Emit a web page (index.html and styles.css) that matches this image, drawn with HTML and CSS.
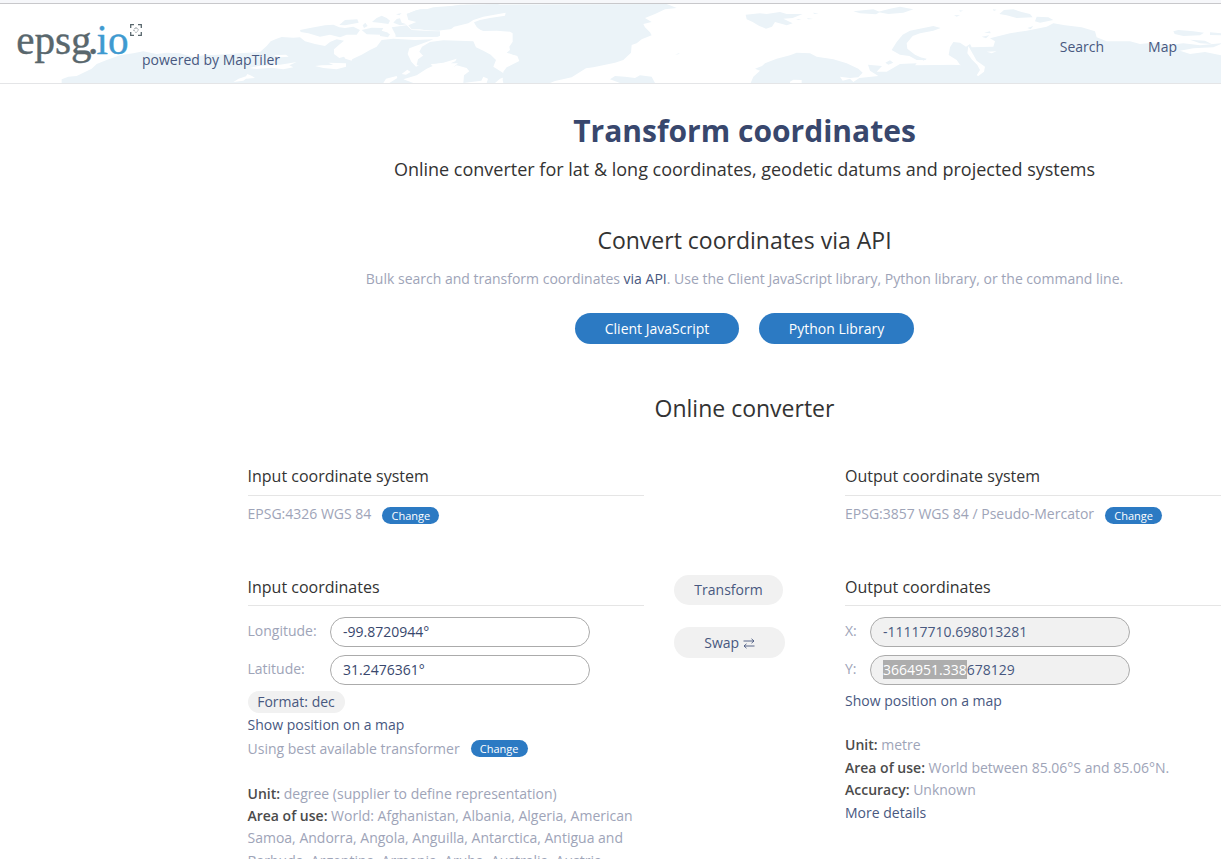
FILE: index.html
```html
<!DOCTYPE html>
<html lang="en">
<head>
<meta charset="utf-8">
<title>Transform coordinates</title>
<link rel="stylesheet" href="styles.css">
</head>
<body>
<div class="page">
  <div class="strip"></div>
  <header class="header">
    <svg class="worldmap" viewBox="0 12 3663 237" width="1221" height="79" fill="#ebf3f8" aria-hidden="true">
      <path d="M185 249V238L205 230 230 228 275 206 290 192 320 180 360 166 400 160 430 154 470 162 500 158 540 160 580 172 610 166 640 165 720 160 780 156 800 138 812 124 830 116 845 111 880 113 900 112 915 124 945 132 975 138 990 126 1010 118 1032 122 1020 132 1002 148 1002 162 1018 174 1040 168 1056 178 1085 164 1110 150 1130 140 1145 120 1180 116 1245 120 1300 118 1285 124 1255 135 1228 145 1223 162 1234 185 1248 200 1266 192 1280 182 1270 168 1258 155 1266 140 1290 126 1330 121 1420 124 1428 142 1450 152 1472 164 1488 180 1480 200 1505 216 1522 228 1500 236 1485 249H1460L1464 236 1450 230 1444 242 1390 249 1392 226 1408 214 1400 204 1370 196 1350 206 1340 218 1330 222 1308 238 1290 249Z"/>
      <path fill="#fff" d="M748 204L770 199 805 196 805 192 840 194 868 190 890 186 868 196 880 202 850 208 815 203 770 207ZM700 246L716 236 738 229 742 222 756 228 765 234 738 236 730 242ZM945 198L965 196 1000 195 985 188 1038 190 1038 200 1010 208 970 204ZM820 166L858 164 866 170 840 172ZM1020 150L1055 140 1062 150 1092 148 1088 158 1062 164 1055 182 1036 176ZM1150 249L1158 236 1190 228 1192 234 1168 249ZM1205 222L1222 209 1232 216 1218 224ZM1210 238L1250 226 1280 206 1298 198 1290 192 1312 190 1345 178 1370 176 1366 184 1352 190 1374 190 1360 202 1348 210 1366 216 1402 208 1400 218 1380 232 1345 228 1320 240 1305 249H1240Z"/>
      <path d="M900 90L930 84 975 76 1000 74 1018 82 1035 84 1060 80 1080 90 1070 104 1040 104 1020 112 990 104 960 110 925 100 902 96ZM1018 75L1035 60 1072 58 1076 68 1035 76ZM1088 76L1096 68 1103 78 1092 84ZM1116 66L1130 54 1145 47 1160 54 1170 62 1165 72 1138 68ZM1180 68L1190 57 1200 55 1205 68 1220 73 1200 76ZM1188 43L1205 39 1198 46ZM1085 90L1115 83 1150 84 1145 92 1165 98 1140 104 1100 103ZM1140 108L1140 98 1158 96 1170 103 1164 112ZM1175 82L1220 76 1235 90 1290 94 1320 98 1315 110 1190 111ZM1225 60L1220 42 1250 30 1280 28 1300 22 1400 14 1500 12 1446 40 1445 60 1425 74 1400 86 1380 82 1350 87 1315 92 1260 90 1290 83 1235 80 1258 68Z"/>
      <path d="M1186 110L1190 96 1235 92 1320 94 1320 108 1298 111ZM1250 195L1254 178 1280 160 1330 145 1370 176 1330 188 1295 192 1280 205Z"/>
      <path d="M1220 42L1260 28 1310 26 1380 14 2000 12 2030 24 1995 28 1965 42 1935 54 1955 66 1930 72 1935 82 1950 97 1955 106 1925 118 1910 130 1895 135 1893 158 1870 180 1845 188 1780 202 1758 205 1715 232 1665 243 1650 249H1510L1508 240 1510 215 1520 202 1540 192 1558 183 1552 168 1520 158 1530 150 1528 140 1538 125 1538 100 1530 95 1490 92 1450 93 1436 88 1420 70 1390 82 1350 88 1235 88 1225 76 1258 62Z"/>
      <path fill="#fff" d="M1318 110L1345 94 1362 80 1405 70 1420 60 1450 50 1517 38 1515 47 1470 54 1440 60 1422 67 1430 82 1445 92 1420 104 1330 116Z"/>
      <path d="M1530 161L1542 154 1542 164ZM1548 160L1560 158 1550 163ZM1830 238L1845 228 1875 230 1905 234 1920 226 1955 230 1965 249H1860ZM2025 164L2040 158 2035 163ZM2237 44L2280 40 2300 42 2340 36 2360 42 2408 42 2378 54 2350 56 2378 70 2360 76 2325 66 2316 80 2298 86 2278 78 2258 66 2240 58ZM2388 58L2405 57 2395 60ZM2420 54L2440 57 2425 58ZM2438 38L2456 40 2444 42ZM2560 34L2620 28 2640 36 2628 43 2580 40ZM2632 36L2670 26 2700 20 2740 28 2710 38 2665 42Z"/>
      <path d="M2252 249L2260 230 2280 212 2265 206 2286 198 2295 190 2330 176 2370 166 2390 158 2430 160 2450 170 2500 178 2540 190 2575 206 2588 218 2575 232 2550 234 2520 230 2528 242 2550 236 2560 246 2578 234 2600 232 2635 228 2610 212 2604 194 2646 198 2630 215 2660 215 2700 192 2750 190 2745 196 2880 194 2870 180 2846 165 2850 142 2860 126 2880 128 2898 140 2910 132 2915 142 2980 140 2985 124 2970 115 3030 100 3080 92 3140 80 3160 70 3195 76 3245 82 3285 94 3290 112 3320 124 3390 124 3420 132 3460 128 3500 136 3550 130 3600 136 3663 130V249Z"/>
      <path fill="#fff" d="M2370 245L2380 239 2405 240 2405 249H2370ZM2905 138L2920 164 2930 182 2955 200 2952 215 2935 228 2930 226 2940 210 2932 195 2915 178 2902 160ZM2765 170L2810 180 2850 184 2885 196 2820 190 2780 188ZM2960 155L2990 154 2975 160ZM3540 152L3580 145 3640 142 3663 132V166L3615 156 3570 162Z"/>
      <path d="M2675 150L2690 126 2708 104 2730 92 2800 78 2822 84 2800 92 2760 100 2738 108 2720 130 2722 146 2745 164 2780 180 2750 180 2728 168 2700 164ZM2656 188L2670 181 2680 188 2665 194ZM2760 172L2780 176 2770 182ZM2862 46L2880 45 2870 50ZM2878 31L2890 32 2880 35ZM2998 42L3012 30 3040 28 3065 36 3090 42 3098 52 3050 54 3020 46ZM3105 64L3110 50 3145 52 3160 60 3120 68ZM2978 28L2990 29 2982 33ZM2952 98L2970 94 2972 100ZM2945 110L2968 106 2958 115ZM3082 84L3100 78 3092 88ZM3520 94L3535 90 3580 94 3612 98 3600 106 3550 108 3524 102ZM3630 97L3663 100V106L3630 105ZM3570 119L3615 122 3635 132 3600 130Z"/>
    </svg>
    <div class="brand">
      <svg class="logo" width="128" height="48" viewBox="15 20 128 48" role="img" aria-label="epsg.io">
        <text class="logo-text" y="54.300" fill="#59676d"><tspan x="16.200" textLength="75.500" lengthAdjust="spacingAndGlyphs">epsg</tspan><tspan x="87.800">.</tspan><tspan x="96.600" textLength="32" lengthAdjust="spacingAndGlyphs" class="logo-io">io</tspan></text>
        <g fill="none" stroke="#59676d">
          <path stroke-width="1.300" d="M130.700 28V24.700H134M138 24.700H141.300V28M141.300 32V35.300H138M134 35.300H130.700V32"/>
          <path stroke-width=".8" stroke-dasharray="2 1" d="M136 27.500L138.500 30 136 32.500 133.500 30Z"/>
        </g>
      </svg>
      <a class="powered">powered by MapTiler</a>
    </div>
    <nav class="nav"><a>Search</a><a>Map</a></nav>
  </header>

  <main class="main">
    <h1 class="title">Transform coordinates</h1>
    <p class="subtitle">Online converter for lat &amp; long coordinates, geodetic datums and projected systems</p>
    <h2 class="section-title">Convert coordinates via API</h2>
    <p class="lead">Bulk search and transform coordinates <a class="link">via API</a>. Use the Client JavaScript library, Python library, or the command line.</p>
    <div class="actions">
      <a class="btn btn-js">Client JavaScript</a>
      <a class="btn btn-python">Python Library</a>
    </div>
    <h2 class="section-title converter-title">Online converter</h2>

    <div class="converter">
      <section class="column">
        <h3 class="heading">Input coordinate system</h3>
        <div class="system"><span>EPSG:4326 WGS 84</span><a class="change">Change</a></div>
        <h3 class="heading coordinates">Input coordinates</h3>
        <div class="fields">
          <div class="field"><span class="label">Longitude:</span><div class="value">-99.8720944°</div></div>
          <div class="field"><span class="label">Latitude:</span><div class="value">31.2476361°</div></div>
        </div>
        <a class="format">Format: dec</a>
        <a class="link show-input">Show position on a map</a>
        <div class="transformer"><span>Using best available transformer</span><a class="change">Change</a></div>
        <p class="info"><b>Unit:</b> degree (supplier to define representation)<br><b>Area of use:</b> World: Afghanistan, Albania, Algeria, American<br>Samoa, Andorra, Angola, Anguilla, Antarctica, Antigua and<br>Barbuda, Argentina, Armenia, Aruba, Australia, Austria,</p>
      </section>
      <div class="middle">
        <a class="soft transform">Transform</a>
        <a class="soft swap">Swap <svg width="12" height="11" viewBox="0 0 12 11" fill="none" stroke="#48587f" stroke-width=".9"><path d="M.5 3H11M8.500.8L11 3 8.500 5.200M11.500 8H1M3.500 5.800L1 8 3.500 10.200"/></svg></a>
      </div>
      <section class="column output">
        <h3 class="heading">Output coordinate system</h3>
        <div class="system"><span>EPSG:3857 WGS 84 / Pseudo-Mercator</span><a class="change">Change</a></div>
        <h3 class="heading coordinates">Output coordinates</h3>
        <div class="fields">
          <div class="field"><span class="label">X:</span><div class="value">-11117710.698013281</div></div>
          <div class="field"><span class="label">Y:</span><div class="value"><span class="selected">3664951.338</span>678129</div></div>
        </div>
        <a class="link show-output">Show position on a map</a>
        <p class="info"><b>Unit:</b> metre<br><b>Area of use:</b> World between 85.06°S and 85.06°N.<br><b>Accuracy:</b> Unknown<br><a class="link">More details</a></p>
      </section>
    </div>
  </main>
</div>
</body>
</html>
```

FILE: styles.css
```css
* { box-sizing: border-box; }
body { margin: 0; height: 859px; overflow: hidden; background: #fff; font: 14px/22px "Open Sans", "Noto Sans", sans-serif; color: #9ea4b8; }
h1, h2, h3, p { margin: 0; font-weight: 400; }
.page { width: 1489px; }
.strip { height: 4px; background: #f6f7fa; border-bottom: 1px solid #c8c8cb; }
.header { position: relative; height: 80px; width: 1221px; border-bottom: 1px solid #e4e5e7; display: flex; justify-content: space-between; padding: 16px 44px 0 15px; }
.worldmap { position: absolute; left: 0; top: 0; }
.brand { position: relative; display: flex; }
.logo { overflow: visible; }
.logo-text { font-family: "Liberation Serif", serif; font-size: 43px; stroke: #59676d; stroke-width: .4px; }
.logo-io { fill: #3f9ad0; stroke: #3f9ad0; }
.powered { margin: 29px 0 0 -1px; color: #48587f; }
.nav { position: relative; display: flex; gap: 44px; padding-top: 16px; color: #48587f; }
.main { display: flex; flex-direction: column; align-items: center; padding-top: 26px; }
.title { font-size: 30px; line-height: 42px; font-weight: 700; color: #38476d; }
.subtitle { margin-top: 5px; font-size: 18px; line-height: 24px; color: #333; }
.section-title { margin-top: 42px; font-size: 23px; line-height: 34px; color: #333; }
.lead { margin-top: 11px; }
.link { color: #48587f; }
.actions { display: flex; gap: 20px; margin-top: 23px; }
.btn { height: 31px; border-radius: 16px; background: #2c7ac3; color: #fff; text-align: center; line-height: 31px; }
.btn-js { width: 164px; }
.btn-python { width: 155px; }
.converter-title { margin-top: 47px; }
.converter { display: grid; grid-template-columns: 396px 201.5px 396px; width: 994px; margin-top: 40px; height: 394px; }
.column { display: flex; flex-direction: column; align-items: flex-start; }
.heading { width: 100%; height: 31px; border-bottom: 1px solid #e5e5e5; font-size: 16px; line-height: 22px; color: #333; }
.coordinates { height: 30px; }
.system { display: flex; gap: 11px; height: 80px; padding-top: 7px; }
.system .change { margin-top: 4px; }
.change { width: 57px; height: 17px; border-radius: 9px; background: #2c7ac3; color: #fff; font-size: 11px; line-height: 17px; text-align: center; }
.fields { display: flex; flex-direction: column; gap: 8px; padding-top: 11px; }
.field { display: flex; height: 30px; }
.label { width: 82.5px; line-height: 28px; }
.output .label { width: 25px; }
.value { width: 260px; border: 1px solid #ababab; border-radius: 15px; padding: 0 12px; line-height: 28px; color: #38476d; }
.output .value { background: #f1f1f1; color: #48587f; }
.selected { background: #adadad; color: #fff; }
.format { width: 97px; height: 22px; margin-top: 6px; border-radius: 11px; background: #f1f1f1; color: #48587f; text-align: center; }
.show-input { margin-top: 1px; }
.transformer { display: flex; gap: 11px; margin-top: 2px; }
.transformer .change { margin-top: 2px; }
.info { margin-top: 23px; line-height: 22.2px; white-space: nowrap; }
.info b { font-weight: 600; color: #4b4b4b; }
.middle { display: flex; flex-direction: column; align-items: flex-start; padding: 110px 0 0 30.5px; }
.soft { height: 30px; border-radius: 16px; background: #f1f1f1; color: #48587f; text-align: center; line-height: 30px; }
.transform { width: 109px; }
.swap { width: 111px; height: 31px; margin-top: 22px; line-height: 31px; }
.swap svg { vertical-align: -1px; }
.show-output { margin-top: 5px; }
.output .info { margin-top: 22px; line-height: 22.7px; }
```
